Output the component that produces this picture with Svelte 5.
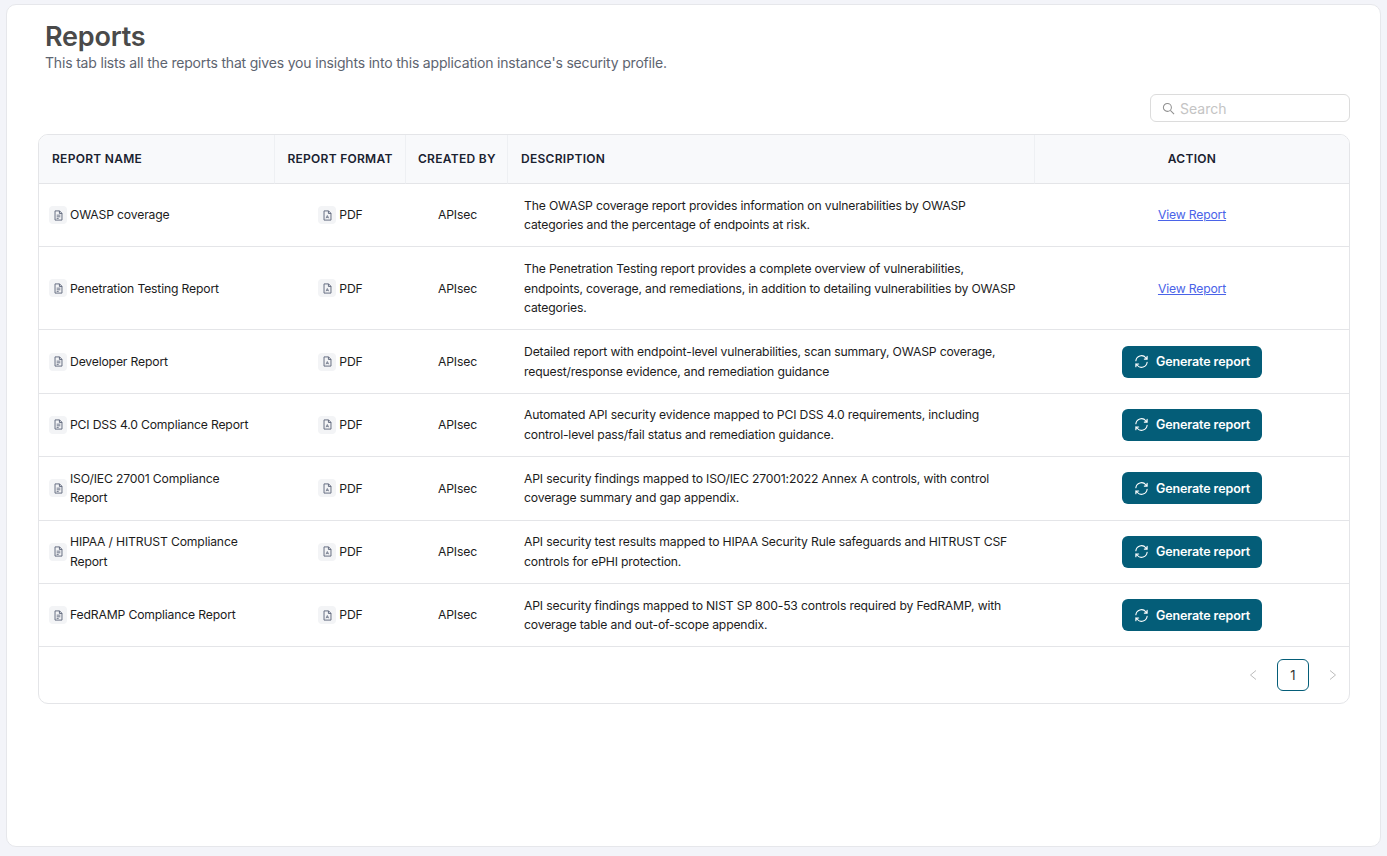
<script>
  const reports = [
    { name: 'OWASP coverage', desc: 'The OWASP coverage report provides information on vulnerabilities by OWASP categories and the percentage of endpoints at risk.', view: true },
    { name: 'Penetration Testing Report', desc: 'The Penetration Testing report provides a complete overview of vulnerabilities, endpoints, coverage, and remediations, in addition to detailing vulnerabilities by OWASP categories.', view: true },
    { name: 'Developer Report', desc: 'Detailed report with endpoint-level vulnerabilities, scan summary, OWASP coverage, request/response evidence, and remediation guidance' },
    { name: 'PCI DSS 4.0 Compliance Report', desc: 'Automated API security evidence mapped to PCI DSS 4.0 requirements, including control-level pass/fail status and remediation guidance.' },
    { name: 'ISO/IEC 27001 Compliance Report', desc: 'API security findings mapped to ISO/IEC 27001:2022 Annex A controls, with control coverage summary and gap appendix.' },
    { name: 'HIPAA / HITRUST Compliance Report', desc: 'API security test results mapped to HIPAA Security Rule safeguards and HITRUST CSF controls for ePHI protection.' },
    { name: 'FedRAMP Compliance Report', desc: 'API security findings mapped to NIST SP 800-53 controls required by FedRAMP, with coverage table and out-of-scope appendix.' }
  ];
</script>

{#snippet fileIcon(pdf)}
  <span class="file">
    <svg viewBox="0 0 12 12" width="11" height="11" fill="none" stroke="#5b6478" stroke-width="1">
      <path d="M2.2 1h5L9.8 3.6V11H2.2z" />
      <path d="M7 1v2.8h2.8" />
      {#if pdf}
        <path d="M4.4 9l1.4-3 1.4 3M4.9 8h2" stroke-width="0.8" />
      {:else}
        <path d="M4 5.6h4M4 7.4h4M4 9.2h2.2" stroke-width="0.9" />
      {/if}
    </svg>
  </span>
{/snippet}

<main class="card">
  <h1>Reports</h1>
  <p class="sub">This tab lists all the reports that gives you insights into this application instance's security profile.</p>
  <div class="tools">
    <label class="search">
      <svg viewBox="0 0 14 14" width="13" height="13" fill="none" stroke="#8f8f8f" stroke-width="1.1">
        <circle cx="5.8" cy="5.8" r="4.3" /><path d="M9 9l4 4" />
      </svg>
      <span>Search</span>
    </label>
  </div>
  <section class="wrap">
    <table>
      <colgroup>
        <col class="c1" /><col class="c2" /><col class="c3" /><col class="c4" /><col />
      </colgroup>
      <thead>
        <tr>
          <th>REPORT NAME</th>
          <th class="ctr">REPORT FORMAT</th>
          <th class="ctr">CREATED BY</th>
          <th>DESCRIPTION</th>
          <th class="ctr">ACTION</th>
        </tr>
      </thead>
      <tbody>
        {#each reports as r}
          <tr>
            <td class="name"><div class="nm">{@render fileIcon(false)}<span>{r.name}</span></div></td>
            <td class="format"><div class="fmt">{@render fileIcon(true)}<span>PDF</span></div></td>
            <td class="ctr by">APIsec</td>
            <td class="desc">{r.desc}</td>
            <td class="ctr">
              {#if r.view}
                <a href="#top">View Report</a>
              {:else}
                <button type="button">
                  <svg viewBox="0 0 16 16" width="15" height="15" fill="none" stroke="#fff" stroke-width="1.2" stroke-linecap="round">
                    <path d="M2 7.2A6 6 0 0 1 12.6 4L14 5.4M14 2.4v3h-3" />
                    <path d="M14 8.8A6 6 0 0 1 3.4 12L2 10.6M2 13.6v-3h3" />
                  </svg>
                  Generate report
                </button>
              {/if}
            </td>
          </tr>
        {/each}
      </tbody>
    </table>
    <nav class="pager">
      <svg viewBox="0 0 10 12" width="10" height="12" fill="none" stroke="#bdbdbd" stroke-width="1"><path d="M8 1.5L2.5 6 8 10.5" /></svg>
      <span class="page">1</span>
      <svg viewBox="0 0 10 12" width="10" height="12" fill="none" stroke="#bdbdbd" stroke-width="1"><path d="M2 1.5L7.5 6 2 10.5" /></svg>
    </nav>
  </section>
</main>

<style>
  :global(body) {
    margin: 0;
    background: #f3f4f9;
  }
  .card {
    box-sizing: border-box;
    width: 1375px;
    height: 843px;
    margin: 4px 0 0 6px;
    padding: 17px 30px 0 31px;
    background: #fff;
    border: 1px solid #e6e7eb;
    border-radius: 10px;
    font-family: Inter, "Noto Sans", sans-serif;
    color: #1c1c1c;
  }
  h1 {
    margin: 0 0 0 7px;
    font-size: 27px;
    line-height: 30px;
    font-weight: 600;
    letter-spacing: -0.2px;
    color: #4a4a4a;
  }
  .sub {
    margin: 1px 0 0 7px;
    font-size: 14px;
    line-height: 20px;
    letter-spacing: -0.18px;
    color: #5d6470;
  }
  .tools {
    display: flex;
    justify-content: flex-end;
    margin-top: 21px;
  }
  .search {
    box-sizing: border-box;
    width: 200px;
    height: 28px;
    display: flex;
    align-items: center;
    gap: 5px;
    padding-left: 11px;
    border: 1px solid #dcdcdc;
    border-radius: 6px;
    font-size: 14px;
    color: #c4c4c4;
  }
  .wrap {
    box-sizing: border-box;
    margin-top: 12px;
    height: 570px;
    border: 1px solid #e4e5e8;
    border-radius: 10px;
    overflow: hidden;
  }
  table {
    width: 100%;
    table-layout: fixed;
    border-collapse: separate;
    border-spacing: 0;
    font-size: 12.2px;
    line-height: 19.6px;
    letter-spacing: -0.17px;
  }
  .c1 { width: 236px; }
  .c2 { width: 131px; }
  .c3 { width: 102px; }
  .c4 { width: 527px; }
  th {
    box-sizing: border-box;
    height: 49px;
    padding: 0 12px 0 13px;
    background: #f8f9fb;
    border-bottom: 1px solid #e4e5e8;
    border-right: 1px solid #eef0f3;
    text-align: left;
    font-size: 12px;
    font-weight: 600;
    letter-spacing: 0.28px;
    color: #1a2230;
    white-space: nowrap;
  }
  th.ctr { padding: 0 12px; }
  th:last-child { border-right: 0; }
  th.ctr, td.ctr { text-align: center; }
  td {
    box-sizing: border-box;
    height: 63.4px;
    padding: 0 12px;
    border-bottom: 1px solid #e4e5e8;
    vertical-align: middle;
  }
  td.name { padding-left: 10px; }
  td.format { padding: 0 12px; }
  td.by { padding: 0 12px 0 13px; }
  td.desc { padding: 11.6px 16px; }
  .nm, .fmt {
    display: flex;
    align-items: center;
    gap: 3px;
  }
  .nm span:last-child { padding-right: 6px; }
  .fmt { justify-content: center; }
  .file {
    flex: none;
    width: 18px;
    height: 18px;
    display: flex;
    align-items: center;
    justify-content: center;
    background: #f3f4f6;
    border-radius: 4px;
  }
  a {
    color: #4a63e8;
    text-decoration: underline;
  }
  button {
    width: 140px;
    height: 32px;
    display: inline-flex;
    align-items: center;
    justify-content: center;
    gap: 7px;
    border: 0;
    border-radius: 6px;
    background: #045d78;
    color: #fff;
    font: 600 12.5px Inter, "Noto Sans", sans-serif;
    letter-spacing: -0.1px;
    vertical-align: middle;
  }
  .pager {
    height: 56px;
    display: flex;
    align-items: center;
    justify-content: flex-end;
    gap: 19px;
    padding-right: 11px;
  }
  .page {
    box-sizing: border-box;
    width: 32px;
    height: 32px;
    display: flex;
    align-items: center;
    justify-content: center;
    border: 1px solid #045d78;
    border-radius: 6px;
    font-size: 13px;
    color: #333;
  }
</style>
